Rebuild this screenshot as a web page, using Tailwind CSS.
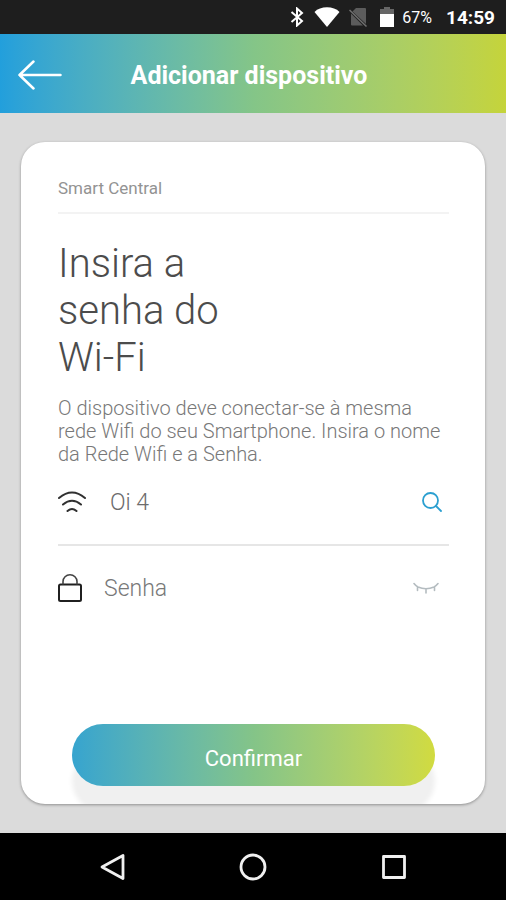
<!DOCTYPE html>
<html lang="pt-BR">
<head>
<meta charset="utf-8">
<meta name="viewport" content="width=device-width, initial-scale=1">
<title>Adicionar dispositivo</title>
<script src="https://cdn.jsdelivr.net/npm/@tailwindcss/browser@4"></script>
</head>
<body class="flex min-h-screen flex-col bg-[#dbdbdb] font-[Roboto,sans-serif]">
  <!-- Status bar -->
  <div class="flex h-[34px] items-center justify-end bg-[#1e1e1e] pr-[11px] text-white">
    <svg class="mr-2.5 h-5 w-[14px]" viewBox="0 0 14 20" fill="none" stroke="currentColor" stroke-width="2" aria-hidden="true"><path d="M1.500 5 12 14 7 18.500V1.500L12 6 1.500 15"/></svg>
    <svg class="mr-2 h-5 w-[26px]" viewBox="0 0 26 20" fill="currentColor" aria-hidden="true"><path d="M13 20 0.500 5C3.500 1.800 8 0.300 13 0.300S22.500 1.800 25.500 5Z"/></svg>
    <svg class="mr-3 h-5 w-5" viewBox="0 0 20 20" aria-hidden="true"><path d="M8 1h9q1 0 1 1v15L4.500 4.500Z" fill="#5c5c5c"/><path d="M3 6.500 15 18.500H4q-1 0-1-1Z" fill="#5c5c5c"/><path d="M1.500 3 18.500 19.500" stroke="#707070" stroke-width="1.500"/></svg>
    <svg class="mr-2 h-5 w-[14px]" viewBox="0 0 14 20" aria-hidden="true"><path d="M4 0h6v2h4v5H0V2h4Z" fill="#666"/><path d="M0 7h14v13H0Z" fill="#fff"/></svg>
    <span class="mr-3.5 pt-0.5 text-base leading-5">67%</span>
    <span class="pt-0.5 text-[19px] leading-5 font-bold">14:59</span>
  </div>

  <header class="relative flex h-[79px] items-center justify-center bg-linear-to-r from-[#229fdc] via-[#84c588] to-[#c5d43a] pt-1 text-white">
    <button type="button" aria-label="Voltar" class="absolute left-[18px]">
      <svg class="h-8 w-11" viewBox="0 0 44 32" fill="none" stroke="currentColor" stroke-width="2.500" stroke-linecap="round" stroke-linejoin="round" aria-hidden="true"><path d="M42.500 15H1.500M15.500 1.500 1.500 15l14 13.500"/></svg>
    </button>
    <h1 class="pr-2 text-[25px] font-bold">Adicionar dispositivo</h1>
  </header>

  <main class="flex flex-1 flex-col px-[21px] pt-[29px] pb-[29px]">
    <form class="flex flex-1 flex-col overflow-hidden rounded-[24px] bg-white pr-9 pb-[18px] pl-[37px] shadow-[0_1px_3px_rgba(0,0,0,0.35)]">
      <p class="border-b-2 border-[#f3f3f3] pt-[35px] pb-[13px] text-[17px] leading-[22px] text-[#939393]">Smart Central</p>
      <h2 class="mt-[26px] text-[40px] leading-[47px] font-light text-[#4c4c4c]">Insira a<br>senha do<br>Wi-Fi</h2>
      <p class="mt-4 text-xl leading-[23px] font-light text-[#787878]">O dispositivo deve conectar-se à mesma rede Wifi do seu Smartphone. Insira o nome da Rede Wifi e a Senha.</p>

      <div class="flex h-20 items-center border-b-2 border-[#e6e6e6] pb-1.5">
        <svg class="mr-6 h-6 w-7" viewBox="0 0 28 24" fill="none" stroke="#303030" stroke-width="2" stroke-linecap="round" aria-hidden="true"><path d="M1 8Q14-3 27 8M5 14.500q9-7.500 18 0M9.500 21q4.500-4 9 0"/></svg>
        <input type="text" aria-label="Rede Wi-Fi" value="Oi 4" class="min-w-0 flex-1 pt-0.5 text-[23px] font-light text-[#6c6c6c] outline-none">
        <button type="button" aria-label="Buscar redes" class="mr-[7px]">
          <svg class="h-5 w-5" viewBox="0 0 20 20" fill="none" stroke="#2b9fd0" stroke-width="1.800" stroke-linecap="round" aria-hidden="true"><circle cx="8.500" cy="8.500" r="7.500"/><path d="m14 14 5 5"/></svg>
        </button>
      </div>

      <div class="flex h-[84px] items-center">
        <svg class="mr-[22px] h-7 w-6" viewBox="0 0 24 28" fill="none" stroke="#202020" stroke-width="2" aria-hidden="true"><rect x="1" y="10.500" width="22" height="16.500" rx="1.500"/><path d="M5 10.500V7.500a7 6.700 0 0 1 14 0v3" stroke="#444" stroke-width="1.600"/></svg>
        <input type="password" aria-label="Senha" placeholder="Senha" class="min-w-0 flex-1 pt-0.5 text-[23px] font-light text-[#6c6c6c] outline-none placeholder:text-[#787878]">
        <button type="button" aria-label="Mostrar senha" class="mr-2.5">
          <svg class="h-3 w-[26px]" viewBox="0 0 26 12" fill="none" stroke="#b4bcc0" stroke-width="1.600" stroke-linecap="round" aria-hidden="true"><path d="M1 1.500q2 2.500 4 3.500q8 3.500 16 0q2-1 4-3.500M4.500 5v3.500M13 6.800V11M21.500 5v3.500"/></svg>
        </button>
      </div>

      <button type="submit" class="mx-[14px] mt-auto h-[62px] rounded-full bg-linear-to-r from-[#36a4cf] via-[#84c488] to-[#d1db3f] pt-1.5 text-[22px] text-white shadow-[0_26px_5px_#f0f0f0]">Confirmar</button>
    </form>
  </main>

  <!-- Android navigation bar -->
  <nav class="flex h-[67px] items-center justify-center gap-[114px] bg-black text-[#f0f0f0]" aria-label="Sistema">
    <button type="button" aria-label="Voltar à tela anterior">
      <svg class="h-7 w-[26px]" viewBox="0 0 26 28" fill="none" stroke="currentColor" stroke-width="2.800" stroke-linejoin="round" aria-hidden="true"><path d="M24 2.500v23L3 14Z"/></svg>
    </button>
    <button type="button" aria-label="Início">
      <svg class="h-7 w-7" viewBox="0 0 28 28" fill="none" stroke="currentColor" stroke-width="2.800" aria-hidden="true"><circle cx="14" cy="14" r="12"/></svg>
    </button>
    <button type="button" aria-label="Aplicativos recentes">
      <svg class="h-7 w-[26px]" viewBox="0 0 26 28" fill="none" stroke="currentColor" stroke-width="2.800" stroke-linejoin="round" aria-hidden="true"><rect x="2.500" y="3.500" width="21" height="21"/></svg>
    </button>
  </nav>
</body>
</html>
